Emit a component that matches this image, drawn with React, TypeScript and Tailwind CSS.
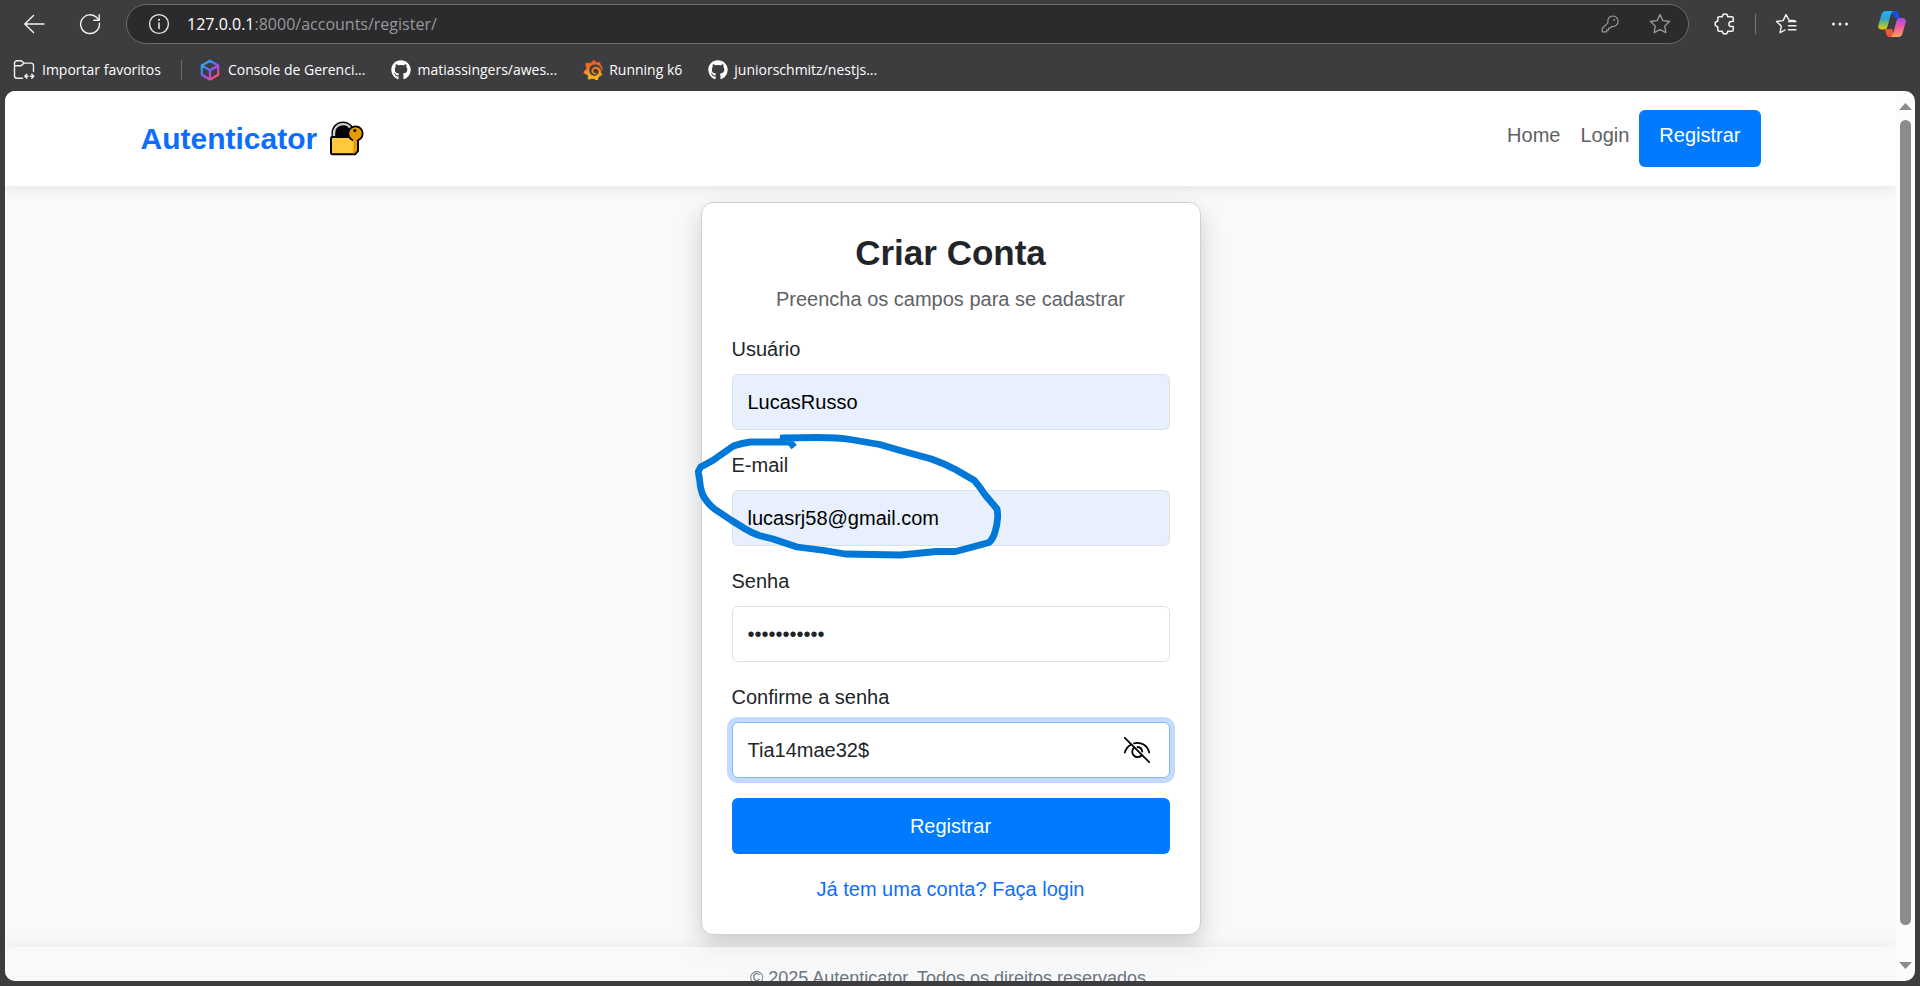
import React from 'react';
import { FaGithub } from 'react-icons/fa';
import { SiGrafana } from 'react-icons/si';

function BackIcon() {
  return (
    <svg className="size-6" viewBox="0 0 24 24" fill="none" stroke="#f2f2f2" strokeWidth="1.4" strokeLinecap="round" strokeLinejoin="round">
      <path d="M22 12H3M11.5 3.5L2.8 12l8.7 8.5" />
    </svg>
  );
}

function ReloadIcon() {
  return (
    <svg className="size-6" viewBox="0 0 24 24" fill="none" stroke="#f2f2f2" strokeWidth="1.4" strokeLinecap="round" strokeLinejoin="round">
      <path d="M21.4 11.2A9.4 9.4 0 1 1 18.8 5.6L21 7.9" />
      <path d="M21.2 2.8v5.4h-5.4" />
    </svg>
  );
}

function InfoIcon() {
  return (
    <svg className="size-6" viewBox="0 0 24 24" fill="none" stroke="#e6e6e6" strokeWidth="1.4">
      <circle cx="12" cy="12" r="9.4" />
      <path d="M12 11v5.5" strokeWidth="1.6" strokeLinecap="round" />
      <circle cx="12" cy="7.8" r="1.1" fill="#e6e6e6" stroke="none" />
    </svg>
  );
}

function KeyIcon() {
  return (
    <svg className="size-5" viewBox="0 0 20 20" fill="none" stroke="#9a9a9a" strokeWidth="1.2" strokeLinejoin="round">
      <path d="M12.9 2a5.3 5.3 0 0 1 5.2 5.3 5.2 5.2 0 0 1-6.3 5.1L10.4 14H8.6v1.9H6.7v1.9H2.2v-3.3l5.7-5.7A5.3 5.3 0 0 1 12.9 2z" />
      <circle cx="14.2" cy="5.9" r=".9" fill="#9a9a9a" stroke="none" />
    </svg>
  );
}

function StarIcon() {
  return (
    <svg className="size-6" viewBox="0 0 24 24" fill="none" stroke="#9a9a9a" strokeWidth="1.3" strokeLinejoin="round">
      <path d="M12 2.6l2.9 6 6.6.9-4.800 4.600 1.200 6.600L12 17.600l-5.900 3.100 1.200-6.600L2.500 9.500l6.600-.9z" />
    </svg>
  );
}

function PuzzleIcon() {
  return (
    <svg className="size-6" viewBox="0 0 24 24" fill="none" stroke="#f2f2f2" strokeWidth="1.5" strokeLinejoin="round">
      <path d="M9.3 4.800a2.700 2.700 0 0 1 5.400 0H19a1.200 1.200 0 0 1 1.200 1.200v3.400h-1.700a2.600 2.600 0 0 0 0 5.200h1.700V18a1.200 1.200 0 0 1-1.200 1.200h-4.300a2.700 2.700 0 0 1-5.400 0H6A1.200 1.200 0 0 1 4.800 18v-3.300a2.700 2.700 0 0 1 0-5.400V6A1.200 1.200 0 0 1 6 4.800z" />
    </svg>
  );
}

function FavoritesIcon() {
  return (
    <svg className="size-6" viewBox="0 0 24 24" fill="none" stroke="#f2f2f2" strokeWidth="1.4" strokeLinecap="round" strokeLinejoin="round">
      <path d="M21 8.700l-5.900-.5L12 2.600l-2.900 6-6.600.9 4.800 4.600-1.200 6.600 5-2.700" />
      <path d="M14.500 9.600H22M14.500 13.700H22M14.500 17.800H22" />
    </svg>
  );
}

function DotsIcon() {
  return (
    <svg className="size-6" viewBox="0 0 24 24" fill="#f2f2f2">
      <circle cx="5.500" cy="12" r="1.500" />
      <circle cx="12" cy="12" r="1.500" />
      <circle cx="18.500" cy="12" r="1.500" />
    </svg>
  );
}

function CopilotIcon() {
  return (
    <svg className="size-7" viewBox="0 0 28 28">
      <defs>
        <linearGradient id="cpA" x1="0" y1="0" x2="0" y2="1">
          <stop offset="0" stopColor="#1fb6f5" />
          <stop offset=".4" stopColor="#2f9fd8" />
          <stop offset=".7" stopColor="#7fbf5a" />
          <stop offset="1" stopColor="#f5c800" />
        </linearGradient>
        <linearGradient id="cpB" x1="0" y1="0" x2="0" y2="1">
          <stop offset="0" stopColor="#a14bf0" />
          <stop offset=".5" stopColor="#ee5c9a" />
          <stop offset="1" stopColor="#fda35c" />
        </linearGradient>
      </defs>
      <path d="M12 1h5.500c1.800 0 2.600 1.200 3.100 2.800L22 8.500h-5L13 1z" fill="#1a4fd6" />
      <path d="M7 19l1 4.200C8.500 25.200 9.500 27 11.500 27H17l-3-8z" fill="#f0573a" />
      <path d="M8 1h7.500c-1.600.5-2.200 2-2.800 4L9.500 16.500c-.6 2-1.600 3-3.500 3H3.500C.8 19.500-.2 17.500.4 15L3.500 4.500C4.200 2.200 5.500 1 8 1z" fill="url(#cpA)" />
      <path d="M20 27h-7.500c1.600-.5 2.200-2 2.800-4l3.200-12c.6-2 1.600-3 3.500-3h2.500c2.700 0 3.700 2 3.100 4.500L24.500 23.500C23.800 25.800 22.500 27 20 27z" fill="url(#cpB)" />
    </svg>
  );
}

function ImportIcon() {
  return (
    <svg className="size-6" viewBox="0 0 24 24" fill="none" stroke="#f2f2f2" strokeWidth="1.400" strokeLinecap="round" strokeLinejoin="round">
      <path d="M10.500 20.300H5A2.500 2.500 0 0 1 2.500 17.800V5.200A2.500 2.500 0 0 1 5 2.700h3.600c.8 0 1.400.3 1.900.9l1.300 1.500H19A2.500 2.500 0 0 1 21.500 7.600v6" />
      <path d="M2.800 7.800h5.600c.9 0 1.500-.4 2-1l1.300-1.500" />
      <path d="M14.800 16.300l-2 2 2 2M19.800 16.300l2 2-2 2M13 18.300h3M18.500 18.300h3" />
    </svg>
  );
}

function CubeIcon() {
  return (
    <svg className="size-6" viewBox="0 0 24 24" fill="none" strokeWidth="2.200" strokeLinejoin="round">
      <defs>
        <linearGradient id="cube" x1="3" y1="3" x2="20" y2="22" gradientUnits="userSpaceOnUse">
          <stop offset="0" stopColor="#22c7d6" />
          <stop offset=".35" stopColor="#4a7bff" />
          <stop offset=".6" stopColor="#b04bf0" />
          <stop offset=".85" stopColor="#ff4f6a" />
          <stop offset="1" stopColor="#ff8a3c" />
        </linearGradient>
      </defs>
      <path stroke="url(#cube)" d="M12 2.800l8.200 4.700v9.300L12 21.500l-8.200-4.700V7.500zM4.500 8L12 12.300 19.500 8M12 12.300v8.700" />
    </svg>
  );
}

function GrafanaIcon() {
  return (
    <>
      <svg className="absolute size-0" aria-hidden="true">
        <linearGradient id="grafana" x1="0" y1="0" x2="0" y2="1">
          <stop offset="0" stopColor="#f2502c" />
          <stop offset=".5" stopColor="#f77f2b" />
          <stop offset="1" stopColor="#fbc81e" />
        </linearGradient>
      </svg>
      <SiGrafana className="size-5" fill="url(#grafana)" stroke="url(#grafana)" strokeWidth="0.8" />
    </>
  );
}

function LockEmoji() {
  return (
    <svg className="size-9" viewBox="0 0 36 36" role="img" aria-label="Cadeado com chave">
      <path d="M3.500 18v-6a10.500 10.500 0 0 1 21 0v6z" fill="#000" stroke="#000" strokeWidth="2" />
      <path d="M5 17v-5a9 9 0 0 1 17-4" fill="none" stroke="#cfcfcf" strokeWidth="2.400" />
      <path d="M2.500 16H29v14l-3 3.200H3.500a1.500 1.500 0 0 1-1.500-1.500V17.500z" fill="#ffc83d" stroke="#000" strokeWidth="2" strokeLinejoin="round" />
      <path d="M25 17h3v12.600l-2.500 2.600H24z" fill="#e79a00" />
      <circle cx="26.500" cy="12.500" r="7.200" fill="#e79a00" stroke="#000" strokeWidth="1.800" />
      <path d="M24 18h4v3.500h-4z" fill="#e79a00" />
      <circle cx="25.800" cy="9.500" r="1.500" fill="#000" />
    </svg>
  );
}

function EyeOffIcon() {
  return (
    <svg className="size-7" viewBox="0 0 28 28" fill="none" stroke="#000" strokeWidth="1.800" strokeLinecap="round">
      <path d="M1.800 1.800l24.400 24.400" />
      <path d="M1.800 16.500C2.900 12.800 5 10.200 7.800 8.700M11 7.300c7-1.900 13.500 2.200 15.200 9.200" />
      <path d="M10.800 11.800a5.300 5.300 0 1 0 7.700 7.700M14.500 11a5.200 5.200 0 0 1 4.700 4.700" />
    </svg>
  );
}

function InkCircle() {
  return (
    <svg className="pointer-events-none absolute -top-6 -left-11 h-34 w-80" viewBox="0 0 320 136" fill="none" stroke="#0078d7" strokeWidth="6.800" strokeLinecap="square" strokeLinejoin="round" aria-hidden="true">
      <path d="M95.300 12L129.700 11.500Q150 11.500 162.500 13.500L191.700 18.500 212.400 24.500 243.400 33Q256 37.500 267.500 43.500L286.400 54.500Q292 61 296.800 68.500L309 83Q310 88 309.500 93 309 100 307 106 305 113 301 116.500 285 121 267.500 125.500L248.500 125.500 212.400 129 157.300 128 136.600 124.500 109 121 85 113 71.200 109.500Q64 107 57.400 103L43.700 94.500 26.400 83Q18 76 14.400 68 12 61 11.600 54L10.300 45.500 12.700 41 24.700 34.500 45.400 20Q54 17 62.600 16L102 16 104 18.500" />
    </svg>
  );
}

const bookmarks = [
  { label: 'Console de Gerenci...', icon: <CubeIcon /> },
  { label: 'matiassingers/awes...', icon: <FaGithub className="size-5 text-white" /> },
  { label: 'Running k6', icon: <GrafanaIcon /> },
  { label: 'juniorschmitz/nestjs...', icon: <FaGithub className="size-5 text-white" /> },
];

function BrowserChrome() {
  return (
    <header className="font-['Open_Sans','Noto_Sans',sans-serif]">
      <div className="flex h-12 items-center pr-[14px] pl-[22px]">
        <button type="button" aria-label="Voltar"><BackIcon /></button>
        <button type="button" aria-label="Atualizar" className="ml-8"><ReloadIcon /></button>
        <div className="ml-6 flex h-10 flex-1 items-center rounded-full border border-[#6b6b6d] bg-[#2b2b2d] pr-4 pl-5">
          <button type="button" aria-label="Informações do site"><InfoIcon /></button>
          <div className="ml-4 flex-1 text-base leading-6 text-[#989898]">
            <span className="text-white">127.0.0.1</span>:8000/accounts/register/
          </div>
          <button type="button" aria-label="Senhas"><KeyIcon /></button>
          <button type="button" aria-label="Favoritar" className="ml-7"><StarIcon /></button>
        </div>
        <button type="button" aria-label="Extensões" className="ml-6"><PuzzleIcon /></button>
        <span className="ml-[18px] h-5 w-px bg-[#77777a]" />
        <button type="button" aria-label="Favoritos" className="ml-[18px]"><FavoritesIcon /></button>
        <button type="button" aria-label="Mais" className="ml-[30px]"><DotsIcon /></button>
        <button type="button" aria-label="Copilot" className="ml-[26px]"><CopilotIcon /></button>
      </div>
      <nav className="flex h-[43px] items-center pl-3 text-sm text-white">
        <a href="#importar" className="flex items-center gap-[6px]"><ImportIcon />Importar favoritos</a>
        <span className="mr-4 ml-5 h-5 w-px bg-[#6b6b6d]" />
        <div className="flex items-center gap-[26px]">
          {bookmarks.map((b) => (
            <a key={b.label} href="#favorito" className="flex items-center gap-[6px]">{b.icon}{b.label}</a>
          ))}
        </div>
      </nav>
    </header>
  );
}

const fieldBase = 'block h-14 w-full rounded-md border px-[15px] text-xl outline-none';

function Field({ id, label, children }: { id: string; label: string; children: React.ReactNode }) {
  return (
    <div className="relative mb-5">
      <label htmlFor={id} className="mb-[10px] block leading-[30px]">{label}</label>
      {children}
    </div>
  );
}

function Page() {
  return (
    <div className="flex min-w-0 flex-1 flex-col overflow-hidden bg-[#f8f9fa] text-xl leading-[30px] text-[#212529]">
      <nav className="z-10 shrink-0 bg-white py-[19px] shadow-[0_3px_12px_rgba(0,0,0,0.08)]">
        <div className="mx-auto flex max-w-[1650px] items-center justify-between px-[15px]">
          <a href="#inicio" className="flex items-center gap-3 text-[30px] font-bold text-[#0d6efd]">
            Autenticator <LockEmoji />
          </a>
          <div className="flex">
            <a href="#home" className="p-[10px] text-[#5f6062]">Home</a>
            <a href="#login" className="p-[10px] text-[#5f6062]">Login</a>
            <a href="#registrar" className="rounded-md bg-[#007bff] px-5 pt-[10px] pb-[17px] text-white">Registrar</a>
          </div>
        </div>
      </nav>
      <main className="shrink-0 px-4 pt-4 pb-3">
        <form className="mx-auto max-w-[500px] rounded-xl border border-[#cfd0d1] bg-white px-[30px] pt-[29px] pb-[30px] shadow-[0_10px_25px_rgba(0,0,0,0.18)]">
          <h1 className="mb-[10px] text-center text-[35px] leading-[42px] font-bold">Criar Conta</h1>
          <p className="mb-5 text-center text-[#5f6266]">Preencha os campos para se cadastrar</p>
          <Field id="usuario" label="Usuário">
            <input id="usuario" type="text" defaultValue="LucasRusso" className={`${fieldBase} border-[#dee2e6] bg-[#e8f0fe] text-black`} />
          </Field>
          <Field id="email" label="E-mail">
            <input id="email" type="email" defaultValue="lucasrj58@gmail.com" className={`${fieldBase} border-[#dee2e6] bg-[#e8f0fe] text-black`} />
            <InkCircle />
          </Field>
          <Field id="senha" label="Senha">
            <input id="senha" type="password" defaultValue="Tia14mae32$" className={`${fieldBase} border-[#dee2e6] bg-white`} />
          </Field>
          <Field id="confirma" label="Confirme a senha">
            <div className="flex h-14 items-center rounded-md border border-[#86b7fe] bg-white pr-[18px] pl-[15px] ring-5 ring-[#c2dbfe]">
              <input id="confirma" type="text" defaultValue="Tia14mae32$" className="min-w-0 flex-1 bg-transparent text-xl outline-none" />
              <button type="button" aria-label="Ocultar senha"><EyeOffIcon /></button>
            </div>
          </Field>
          <button type="submit" className="h-14 w-full rounded-md bg-[#007bff] text-white">Registrar</button>
          <p className="mt-5 text-center"><a href="#entrar" className="text-[#0d6efd]">Já tem uma conta? Faça login</a></p>
        </form>
      </main>
      <footer className="shrink-0 bg-[#f8f9fa]/60 py-4 text-center text-lg leading-[30px] text-[#6c757d] shadow-[0_-3px_12px_rgba(0,0,0,0.05)]">
        © 2025 Autenticator. Todos os direitos reservados.
      </footer>
    </div>
  );
}

function Scrollbar() {
  return (
    <div className="flex w-[19px] shrink-0 flex-col items-center bg-[#fcfcfc] py-3" aria-hidden="true">
      <svg className="h-[7px] w-[13px]" viewBox="0 0 13 7" fill="#8b8b8b"><path d="M0 7L6.500 0 13 7z" /></svg>
      <div className="mt-[10px] mb-[37px] w-[11px] flex-1 rounded-full bg-[#8b8b8b]" />
      <svg className="h-[7px] w-[13px]" viewBox="0 0 13 7" fill="#8b8b8b"><path d="M0 0h13L6.500 7z" /></svg>
    </div>
  );
}

export default function App() {
  return (
    <div className="flex h-screen flex-col bg-[#3d3d3f] font-['Liberation_Sans',Arial,sans-serif]">
      <BrowserChrome />
      <div className="mx-[5px] mb-[5px] flex min-h-0 flex-1 overflow-hidden rounded-[10px]">
        <Page />
        <Scrollbar />
      </div>
    </div>
  );
}
